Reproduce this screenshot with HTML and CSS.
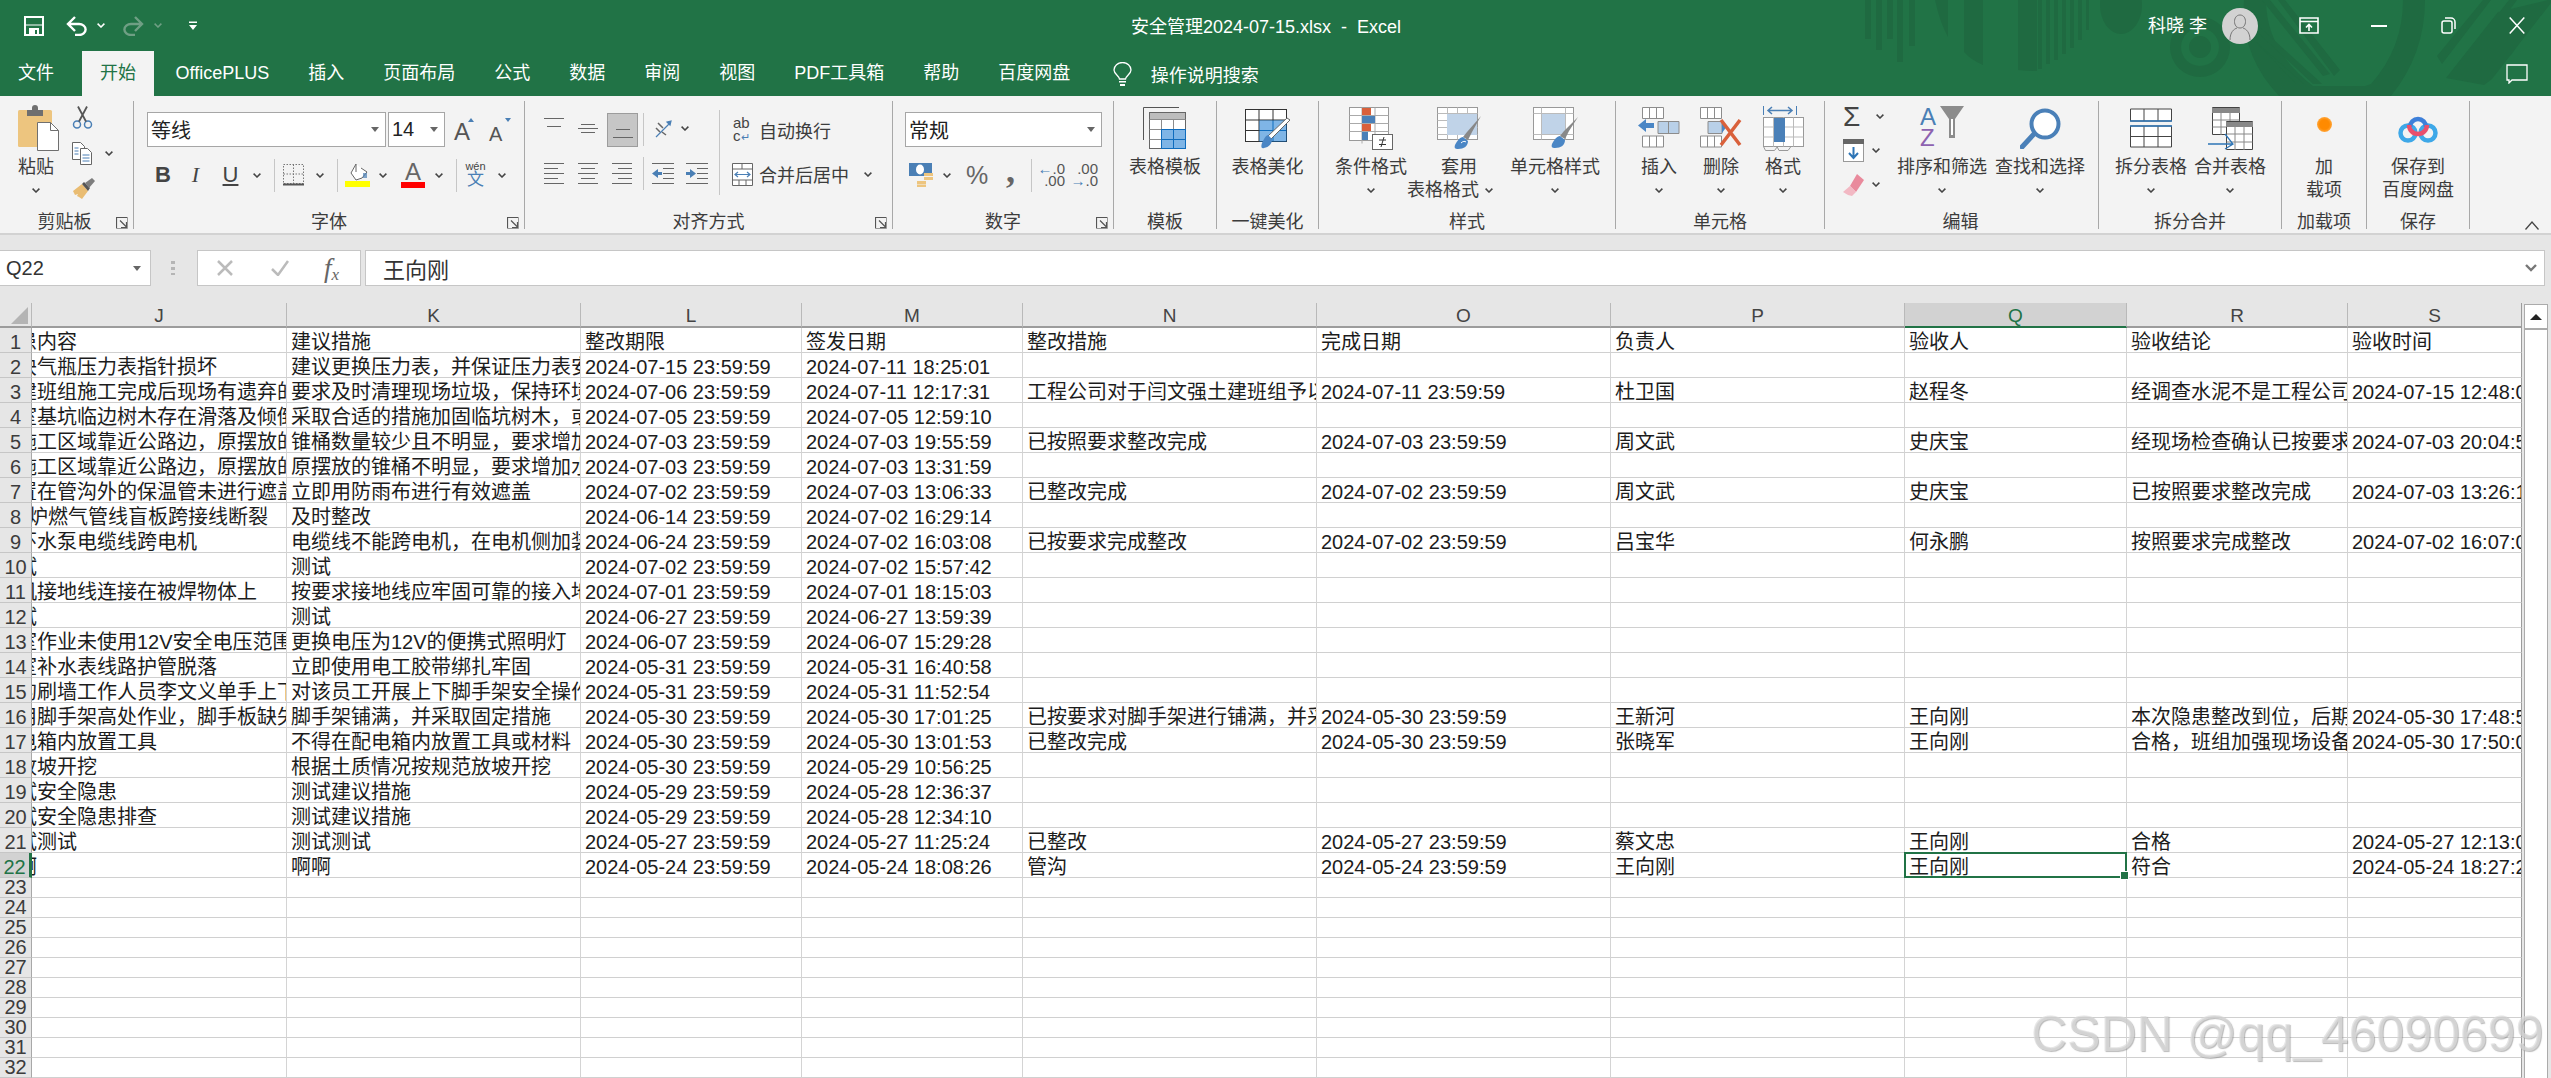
FILE: index.html
```html
<!DOCTYPE html>
<html lang="zh-CN">
<head>
<meta charset="utf-8">
<title>安全管理2024-07-15.xlsx - Excel</title>
<link rel="stylesheet" href="styles.css">
</head>
<body>
<svg class="defs" width="0" height="0" aria-hidden="true">
  <symbol id="chev" viewBox="0 0 8 5"><path d="M.6.6 4 4 7.4.6" fill="none" stroke="#444" stroke-width="1.5"/></symbol>
  <symbol id="launch" viewBox="0 0 12 12"><path d="M.5 11.500V.5h11M4 3.500l6.500 6.500M10.500 5v5.500H5" fill="none" stroke="#555" stroke-width="1.200"/><path d="M11.500 1v10.500H1" fill="none" stroke="#999"/></symbol>
  <symbol id="minitable" viewBox="0 0 22 12"><path d="M.5.5h21v11H.5zM7.500.5v11M14.500.5v11" fill="#fff" stroke="#8c8c8c"/></symbol>
</svg>

<header class="chrome">
  <svg class="decor" width="711" height="96" viewBox="1840 0 711 96" aria-hidden="true">
    <g fill="#1f6a41">
      <path d="M1865 0h6v39h-6zM1876 0h6v50h-6zM1887 0h6v39h-6zM1897 0h6v62h-6zM1909 0h6v46h-6zM1935 0h13v37q-8-14-13-37zM1964 0h19v65q-12-5-19-13zM2018 0h19v71q-10 0-19-1zM2030 0h4v69h-4zM2038 0h4v69h-4zM2046 0h4v64h-4zM2054 0h4v60h-4zM2062 0h4v54h-4zM2070 0h4v48h-4zM2078 0h4v40h-4zM2086 0h3v30h-3z"/>
      <ellipse cx="2121" cy="5" rx="21" ry="29"/>
      <path d="M2200 17a30 30 0 1 0 0 60 30 30 0 0 0 0-60zm0 11a19 19 0 1 1 0 38 19 19 0 0 1 0-38z"/>
      <circle cx="2200" cy="47" r="11"/>
      <path d="M2244 0q-4 55 35 96h112q34-42 34-96h-22q0 48-32 84l-6 2h-52q-47-36-47-86z"/>
      <path d="M2262 0h8l60 74-7 2zM2278 0h7l55 70-6 6zM2252 20l66 60 4 4h-9l-58-54zM2256 42l48 42h-8z"/>
      <path d="M2437 56l46-56h8l-49 64zM2459 64l50-64h8l-52 71zM2446 78l52-66 50-12h3v3l-59 76-8 6zM2476 72l36-44 39-28-40 55-29 26z"/>
    </g>
  </svg>
  <div class="titlebar">
    <div class="qat">
      <svg class="q-save" width="20" height="20" viewBox="0 0 20 20"><path d="M1 1h18v18H1z" fill="none" stroke="#fff" stroke-width="2"/><path d="M5 12h10v7H5z" fill="#fff"/><path d="M11 14h2v4h-2z" fill="#217346"/><path d="M1 1h18v8H1z" fill="none" stroke="#fff" stroke-width="1"/></svg>
      <svg class="q-undo" width="22" height="20" viewBox="0 0 22 20"><path d="M2 8h11a6 5 0 0 1 0 11H9M9 1 2 8l7 7" fill="none" stroke="#fff" stroke-width="2.400"/></svg>
      <svg class="q-ch1" width="8" height="5" viewBox="0 0 8 5"><path d="M.6.6 4 4 7.400.6" fill="none" stroke="#fff" stroke-width="1.500"/></svg>
      <svg class="q-redo" width="22" height="20" viewBox="0 0 22 20"><path d="M20 8H9a6 5 0 0 0 0 11h4M13 1l7 7-7 7" fill="none" stroke="#6f9f84" stroke-width="2.400"/></svg>
      <svg class="q-ch2" width="8" height="5" viewBox="0 0 8 5"><path d="M.6.6 4 4 7.400.6" fill="none" stroke="#6f9f84" stroke-width="1.500"/></svg>
      <svg class="q-cust" width="8" height="9" viewBox="0 0 8 9"><path d="M0 .5h8v1.500H0zM0 4h8L4 9z" fill="#fff"/></svg>
    </div>
    <div class="doc-title">安全管理2024-07-15.xlsx&nbsp;&nbsp;-&nbsp;&nbsp;Excel</div>
    <div class="winctl">
      <span class="user">科晓 李</span>
      <svg class="avatar" width="36" height="36" viewBox="0 0 36 36"><circle cx="18" cy="18" r="18" fill="#d2d2d2"/><path d="M18 7c3.500 0 5.500 3 5.500 6.500S21.500 20 18 20s-5.500-3-5.500-6.500S14.500 7 18 7zM8 32c0-8 4-11 7-12M28 32c0-8-4-11-7-12" fill="none" stroke="#777" stroke-width="1"/></svg>
      <svg class="w-ribbon" width="20" height="17" viewBox="0 0 20 17"><path d="M1 1h18v15H1zM1 4.500h18" fill="none" stroke="#fff" stroke-width="1.600"/><path d="M10 14V8M7 10.500 10 7.500l3 3" fill="none" stroke="#fff" stroke-width="1.600"/></svg>
      <svg class="w-min" width="16" height="2"><rect width="16" height="2" fill="#fff"/></svg>
      <svg class="w-rest" width="15" height="17" viewBox="0 0 15 17"><rect x="1" y="4" width="10" height="12" rx="2" fill="none" stroke="#fff" stroke-width="1.500"/><path d="M4 1h6a4 4 0 0 1 4 4v7" fill="none" stroke="#fff" stroke-width="1.500"/></svg>
      <svg class="w-close" width="16" height="17" viewBox="0 0 16 17"><path d="M.7.5l14.600 16M15.300.5.700 16.500" stroke="#fff" stroke-width="1.500"/></svg>
    </div>
  </div>
  <nav class="tabs">
    <span class="tab tab-file">文件</span>
    <span class="tab tab-on">开始</span>
    <span class="tab tab-plus">OfficePLUS</span>
    <span class="tab">插入</span>
    <span class="tab">页面布局</span>
    <span class="tab">公式</span>
    <span class="tab">数据</span>
    <span class="tab">审阅</span>
    <span class="tab">视图</span>
    <span class="tab">PDF工具箱</span>
    <span class="tab">帮助</span>
    <span class="tab">百度网盘</span>
    <svg class="bulb" width="19" height="24" viewBox="0 0 19 24"><path d="M6.500 17c0-3-5.500-5-5.500-9a8.500 7.500 0 0 1 17 0c0 4-5.500 6-5.500 9z" fill="none" stroke="#fff" stroke-width="1.300"/><path d="M6 19h7v1.500H6zM7 22h5v2H7z" fill="#fff"/></svg>
    <span class="tell">操作说明搜索</span>
    <svg class="comment" width="22" height="20" viewBox="0 0 22 20"><path d="M1 1h20v15H6l-3 3v-3H1z" fill="none" stroke="#fff" stroke-width="1.300"/></svg>
  </nav>
</header>

<section class="ribbon">
  <!-- 剪贴板 -->
  <div class="group g-clip">
    <div class="g-body">
      <div class="big b-paste">
        <div class="big-ic">
          <svg class="paste-ic" width="42" height="46" viewBox="0 0 42 46"><rect y="5" width="34" height="37" rx="1.500" fill="#edc57f"/><path d="M9 5h5V3a3 3 0 0 1 6 0v2h5v6H9z" fill="#6f6f6f"/><path d="M19.500 17.500h13l8 8v20h-21z" fill="#fff" stroke="#6f6f6f"/><path d="M32.500 17.500v8h8" fill="none" stroke="#6f6f6f"/></svg>
        </div>
        <span class="lbl">粘贴</span>
        <svg class="chev-big" width="8" height="5"><use href="#chev"/></svg>
      </div>
      <div class="clip-col">
        <svg class="clip-row" width="21" height="23" viewBox="0 0 21 23"><circle cx="5" cy="18.500" r="3.500" fill="none" stroke="#4a7fb5" stroke-width="1.500"/><circle cx="16" cy="18.500" r="3.500" fill="none" stroke="#4a7fb5" stroke-width="1.500"/><path d="M7 15.500 15 .5M14 15.500 6 .5" stroke="#555" stroke-width="1.800"/></svg>
        <div class="clip-row clip-copy">
          <svg width="21" height="23" viewBox="0 0 21 23"><path d="M.5.5h8l4 4v13H.5z" fill="#fff" stroke="#666"/><path d="M8.500 6.500h7l4 4v12h-11z" fill="#fff" stroke="#666"/><path d="M2.500 6h4M2.500 9h4M2.500 12h4M10.500 13h7M10.500 16h7M10.500 19h7" stroke="#4a7fb5"/></svg>
          <svg class="copy-ch" width="8" height="5"><use href="#chev"/></svg>
        </div>
        <svg class="clip-row" width="24" height="21" viewBox="0 0 24 21"><path d="M1 13l9-7 6 7-6 8-3-2-2-1 1-2-3 1z" fill="#e9bc72"/><path d="M10 6l2-2 6 6-2 3z" fill="#555"/><path d="M13 5 20 0l3 3-6 7z" fill="#7d7d7d"/></svg>
      </div>
    </div>
    <div class="g-label l-clip">剪贴板</div>
    <svg class="launch" width="12" height="12"><use href="#launch"/></svg>
  </div>

  <!-- 字体 -->
  <div class="group g-font">
    <div class="g-body col">
      <div class="row1 f-row1">
        <div class="combo c-font"><span>等线</span><i class="drop"></i></div>
        <div class="combo c-size"><span>14</span><i class="drop"></i></div>
        <span class="grow"><b class="big-a">A</b><i class="tri-up"></i></span>
        <span class="shrink"><b class="small-a">A</b><i class="tri-down"></i></span>
      </div>
      <div class="row2">
        <span class="slot w32 t-b">B</span>
        <span class="slot w33 t-i">I</span>
        <span class="slot w37 t-u">U</span>
        <span class="slot w16"><svg width="8" height="5"><use href="#chev"/></svg></span>
        <i class="sep s9"></i>
        <span class="slot w37"><svg width="21" height="22" viewBox="0 0 21 22"><path d="M.5.5h20v19H.5zM10.500.5v19M.5 10h20" fill="none" stroke="#777" stroke-dasharray="1.500 1.500"/><path d="M0 20.500h21" stroke="#555" stroke-width="2"/></svg></span>
        <span class="slot w16"><svg width="8" height="5"><use href="#chev"/></svg></span>
        <i class="sep s9"></i>
        <span class="slot w39"><svg width="25" height="24" viewBox="0 0 25 24"><path d="M11 1l-5 9 5 7 6-2 5-6-6-4" fill="#fff" stroke="#666"/><path d="M11 1v8" stroke="#666"/><path d="M18 10h4v5h-4z" fill="#4a7fb5" opacity=".7"/><rect y="18" width="25" height="6" fill="#ff0"/></svg></span>
        <span class="slot w12"><svg width="8" height="5"><use href="#chev"/></svg></span>
        <span class="slot w44 color-a"><b>A</b><i class="bar-red"></i></span>
        <span class="slot w8"><svg width="8" height="5"><use href="#chev"/></svg></span>
        <i class="sep s13"></i>
        <span class="slot w37 wen"><em>wén</em><b>文</b></span>
        <span class="slot w16"><svg width="8" height="5"><use href="#chev"/></svg></span>
      </div>
    </div>
    <div class="g-label l-font">字体</div>
    <svg class="launch" width="12" height="12"><use href="#launch"/></svg>
  </div>

  <!-- 对齐方式 -->
  <div class="group g-align">
    <div class="g-body">
      <div class="col al-left">
        <div class="row1 al-r1">
          <span class="slot w34 al-top"><svg width="20" height="9" viewBox="0 0 20 9"><path d="M0 .5h20M3 8.500h14" stroke="#666"/></svg></span>
          <span class="slot w34 al-mid"><svg width="20" height="9" viewBox="0 0 20 9"><path d="M3 .5h14M0 4.500h20M3 8.500h14" stroke="#666"/></svg></span>
          <span class="active-box"><svg width="20" height="9" viewBox="0 0 20 9"><path d="M3 .5h14M0 8.500h20" stroke="#666"/></svg></span>
          <i class="sep s5"></i>
          <svg class="orient" width="19" height="19" viewBox="0 0 19 19"><path d="M2 17 16 3M17 1l-4 1 3 3z" stroke="#4a7fb5" fill="#4a7fb5" stroke-width="1.200"/><path d="M4 3l5 5M2 8l4 4M8 12l4 3" stroke="#666" stroke-width="1.500" fill="none"/></svg>
          <svg class="orient-ch" width="8" height="5"><use href="#chev"/></svg>
        </div>
        <div class="row2 al-r2">
          <span class="slot w34"><svg width="20" height="21" viewBox="0 0 20 21"><path d="M0 .5h20M0 5.500h14M0 10.500h20M0 15.500h14M0 20.500h20" stroke="#666"/></svg></span>
          <span class="slot w34"><svg width="20" height="21" viewBox="0 0 20 21"><path d="M0 .5h20M3 5.500h14M0 10.500h20M3 15.500h14M0 20.500h20" stroke="#666"/></svg></span>
          <span class="slot w34"><svg width="20" height="21" viewBox="0 0 20 21"><path d="M0 .5h20M6 5.500h14M0 10.500h20M6 15.500h14M0 20.500h20" stroke="#666"/></svg></span>
          <i class="sep s4"></i>
          <svg class="ind1" width="22" height="21" viewBox="0 0 22 21"><path d="M0 .5h22M11 5.500h11M11 10.500h11M11 15.500h11M0 20.500h22" stroke="#666"/><path d="M0 10.500 6 6v3h4v3H6v3z" fill="#4a7fb5"/></svg>
          <svg class="ind2" width="22" height="21" viewBox="0 0 22 21"><path d="M0 .5h22M11 5.500h11M11 10.500h11M11 15.500h11M0 20.500h22" stroke="#666"/><path d="M10 10.500 4 6v3H0v3h4v3z" fill="#4a7fb5"/></svg>
        </div>
      </div>
      <i class="sep-tall"></i>
      <div class="col al-right">
        <div class="al-wrap">
          <span class="wrap-ic"><span>ab</span><span>c<small>↵</small></span></span>
          <span class="txt">自动换行</span>
        </div>
        <div class="al-merge">
          <svg width="21" height="23" viewBox="0 0 21 23"><path d="M.5.5h20v22H.5zM.5 6h20M.5 17h20M10 .5V6M7 17v5.500M14 17v5.500" fill="#fff" stroke="#666"/><path d="M3 11.500h15M6 9l-3 2.500L6 14M15 9l3 2.500L15 14" fill="none" stroke="#4a7fb5" stroke-width="1.200"/></svg>
          <span class="txt">合并后居中</span>
          <svg class="merge-ch" width="8" height="5"><use href="#chev"/></svg>
        </div>
      </div>
    </div>
    <div class="g-label l-align">对齐方式</div>
    <svg class="launch" width="12" height="12"><use href="#launch"/></svg>
  </div>

  <!-- 数字 -->
  <div class="group g-num">
    <div class="g-body col">
      <div class="row1 n-row1"><div class="combo c-num"><span>常规</span><i class="drop"></i></div></div>
      <div class="row2 n-row2">
        <svg class="cur" width="24" height="24" viewBox="0 0 24 24"><rect width="23" height="13" fill="#4a7fb5"/><ellipse cx="11" cy="6.500" rx="4" ry="5" fill="#fff"/><path d="M15 10h9v3h-9zM15 14h9v3h-9zM8 18h9v3H8zM8 21.500h9V24H8z" fill="#edc57f"/></svg>
        <svg class="cur-ch" width="8" height="5"><use href="#chev"/></svg>
        <span class="pct">%</span>
        <span class="comma">,</span>
        <i class="sep s15"></i>
        <span class="dec d1"><span><b>←</b>.0</span><span>.00</span></span>
        <span class="dec d2"><span>.00</span><span><b>→</b>.0</span></span>
      </div>
    </div>
    <div class="g-label">数字</div>
    <svg class="launch" width="12" height="12"><use href="#launch"/></svg>
  </div>

  <!-- 模板 -->
  <div class="group g-tpl">
    <div class="g-body">
      <div class="big w-full">
        <div class="big-ic">
          <svg width="44" height="42" viewBox="0 0 44 42"><path d="M.5 33V.5H36" fill="none" stroke="#555"/><rect x="6.500" y="5.500" width="36" height="36" fill="#fff" stroke="#666"/><rect x="7" y="6" width="35" height="6" fill="#bdbdbd"/><path d="M6.500 12.500h36M6.500 22.500h36M6.500 32.500h36M18.500 12.500v29M30.500 12.500v29" stroke="#8c8c8c"/><rect x="18" y="22" width="25" height="20" fill="#0f6cbd"/><path d="M19 23h11v9H19zM31 23h11v9H31zM19 33h11v8H19zM31 33h11v8H31z" fill="#7fb5e6"/></svg>
        </div>
        <span class="lbl">表格模板</span>
      </div>
    </div>
    <div class="g-label">模板</div>
  </div>

  <!-- 一键美化 -->
  <div class="group g-beau">
    <div class="g-body">
      <div class="big w-full">
        <div class="big-ic">
          <svg width="46" height="41" viewBox="0 0 46 41"><rect x=".5" y="1.500" width="41" height="32" fill="#fff" stroke="#333"/><path d="M.5 12h41M.5 22.500h41M14 1.500v32M28 1.500v32" stroke="#333"/><rect x="14.500" y="12.500" width="27" height="21" fill="#0f6cbd"/><path d="M15 13h12.500v9H15zM28.500 13H41v9H28.500zM15 23h12.500v10H15zM28.500 23H41v10H28.500z" fill="#7fb5e6"/><path d="M45 12 26 31l-3-3L42 10z" fill="#fff" stroke="#666"/><path d="M23 27c-3 1-4 4-6 8-1 3-1 6 2 5 5-1 8-4 8-9z" fill="#4a86c5"/></svg>
        </div>
        <span class="lbl">表格美化</span>
      </div>
    </div>
    <div class="g-label">一键美化</div>
  </div>

  <!-- 样式 -->
  <div class="group g-style">
    <div class="g-body">
      <div class="big w88">
        <div class="big-ic">
          <svg width="44" height="43" viewBox="0 0 44 43"><rect x=".5" y=".5" width="39" height="33" fill="#fff" stroke="#999"/><path d="M.5 8.500h39M.5 16.500h39M.5 24.500h39M13 .5v36M26 .5v33" stroke="#aaa"/><rect x="13" y="1" width="9" height="7" fill="#d9603b"/><rect x="13" y="9" width="13" height="7" fill="#4a80b8"/><rect x="13" y="17" width="9" height="7" fill="#d9603b"/><rect x="13" y="25" width="6" height="8" fill="#4a80b8"/><rect x="23.500" y="27.500" width="20" height="15" fill="#fff" stroke="#666"/><path d="M30 37.500h7M30 33h7M35 30l-3 10" stroke="#333"/></svg>
        </div>
        <span class="lbl">条件格式</span>
        <svg class="chev-big" width="8" height="5"><use href="#chev"/></svg>
      </div>
      <div class="big w88">
        <div class="big-ic">
          <svg width="44" height="42" viewBox="0 0 44 42"><rect x=".5" y=".5" width="40" height="32" fill="#fff" stroke="#999"/><path d="M.5 6.500h40M.5 13.500h40M.5 20.500h40M.5 27.500h40M10.500.5v32M20.500.5v32M30.500.5v32" stroke="#bbb"/><rect x="10" y="7" width="30" height="21" fill="#c0d3e8"/><path d="M44 9 35 25l-4 8-5-3 4-5z" fill="#888"/><path d="M26 30c-3 0-6 4-8 8-1 3 0 4 3 4 6 0 10-3 10-8z" fill="#4a86c5"/><path d="M24 36c2-2 4-2 5-1" stroke="#fff" fill="none"/></svg>
        </div>
        <span class="lbl">套用</span>
        <span class="lbl lbl-ch">表格格式<svg width="8" height="5"><use href="#chev"/></svg></span>
      </div>
      <div class="big w104">
        <div class="big-ic">
          <svg width="45" height="42" viewBox="0 0 45 42"><rect x=".5" y=".5" width="40" height="32" fill="#fff" stroke="#999"/><path d="M.5 6.500h40M.5 27.500h40M8.500.5v32M32.500.5v32" stroke="#bbb"/><rect x="9" y="7" width="23" height="20" fill="#c0d3e8"/><path d="M45 10 36 24l-4 8-5-3 4-5z" fill="#888"/><path d="M27 29c-3 0-6 4-8 8-1 3 0 4 3 4 6 0 10-3 10-8z" fill="#4a86c5"/></svg>
        </div>
        <span class="lbl">单元格样式</span>
        <svg class="chev-big" width="8" height="5"><use href="#chev"/></svg>
      </div>
    </div>
    <div class="g-label">样式</div>
  </div>

  <!-- 单元格 -->
  <div class="group g-cell">
    <div class="g-body">
      <div class="big w62">
        <div class="big-ic">
          <svg width="42" height="43" viewBox="0 0 42 43"><use href="#minitable" x="4" y="0" width="22" height="12"/><use href="#minitable" x="4" y="26" width="22" height="17"/><path d="M0 18.500 8 12v4h8v5H8v4z" fill="#4a86c5"/><path d="M20 14.500h21v12H20zM30.500 14.500v12" fill="#b9d0e8" stroke="#8c8c8c"/></svg>
        </div>
        <span class="lbl">插入</span>
        <svg class="chev-big" width="8" height="5"><use href="#chev"/></svg>
      </div>
      <div class="big w62">
        <div class="big-ic">
          <svg width="42" height="43" viewBox="0 0 42 43"><use href="#minitable" x="0" y="0" width="22" height="12"/><use href="#minitable" x="0" y="26" width="22" height="17"/><path d="M8 14.500h14v12H8z" fill="#b9d0e8" stroke="#8c8c8c"/><path d="M22 15l4 5.500-4 5.500" fill="#4a86c5"/><path d="M21 13l19 25M40 13 21 38" stroke="#d9603b" stroke-width="3.500" fill="none"/></svg>
        </div>
        <span class="lbl">删除</span>
        <svg class="chev-big" width="8" height="5"><use href="#chev"/></svg>
      </div>
      <div class="big w62">
        <div class="big-ic">
          <svg width="41" height="45" viewBox="0 0 41 45"><path d="M.5 0v9M33.500 0v9" stroke="#4a7fb5"/><path d="M5 4.500h24M9 1 5 4.500 9 8M25 1l4 3.500L25 8" fill="none" stroke="#4a7fb5" stroke-width="1.500"/><rect x=".5" y="11.500" width="40" height="29" fill="#fff" stroke="#999"/><path d="M.5 21h40M.5 31h40M10.500 11.500v29M20.500 11.500v29M30.500 11.500v29" stroke="#bbb"/><rect x="11" y="12" width="11" height="24" fill="#4a80b8"/><path d="M.5 40.500l2 4h9l3-4M14 40.500l2 4h9l3-4" fill="none" stroke="#999"/></svg>
        </div>
        <span class="lbl">格式</span>
        <svg class="chev-big" width="8" height="5"><use href="#chev"/></svg>
      </div>
    </div>
    <div class="g-label">单元格</div>
  </div>

  <!-- 编辑 -->
  <div class="group g-edit">
    <div class="g-body">
      <div class="edit-col">
        <div class="edit-row"><span class="sigma">Σ</span><svg class="edit-ch1" width="8" height="5"><use href="#chev"/></svg></div>
        <div class="edit-row"><svg width="21" height="23" viewBox="0 0 21 23"><rect x=".5" y=".5" width="20" height="22" fill="#fff" stroke="#999"/><rect width="21" height="5" fill="#666"/><path d="M10.500 8v11M6 14l4.500 5 4.500-5" fill="none" stroke="#2e75b6" stroke-width="2"/></svg><svg class="edit-ch2" width="8" height="5"><use href="#chev"/></svg></div>
        <div class="edit-row"><svg width="21" height="22" viewBox="0 0 21 22"><path d="M14 0l7 6-8 12-6-6z" fill="#e98a9c"/><path d="M7 12l6 6-4 4-4-1-5-3z" fill="#f2b8c3"/></svg><svg class="edit-ch2" width="8" height="5"><use href="#chev"/></svg></div>
      </div>
      <div class="big w90">
        <div class="big-ic sort-ic">
          <span class="az"><span class="a-blue">A</span><span class="z-purple">Z</span></span>
          <svg width="24" height="32" viewBox="0 0 24 32"><path d="M0 0h24l-9 13v19h-6V13z" fill="#8c8c8c"/><path d="M11 13h2v16h-2z" fill="#fff"/></svg>
        </div>
        <span class="lbl">排序和筛选</span>
        <svg class="chev-big" width="8" height="5"><use href="#chev"/></svg>
      </div>
      <div class="big w90 find">
        <div class="big-ic">
          <svg width="41" height="41" viewBox="0 0 41 41"><circle cx="25" cy="16" r="13.500" fill="#fff" stroke="#4a80b8" stroke-width="4"/><path d="M14 26 2 39" stroke="#4a80b8" stroke-width="5" stroke-linecap="round"/></svg>
        </div>
        <span class="lbl">查找和选择</span>
        <svg class="chev-big" width="8" height="5"><use href="#chev"/></svg>
      </div>
    </div>
    <div class="g-label l-edit">编辑</div>
  </div>

  <!-- 拆分合并 -->
  <div class="group g-split">
    <div class="g-body">
      <div class="big w78">
        <div class="big-ic">
          <svg width="42" height="40" viewBox="0 0 42 40"><path d="M.5 1h41v12H.5zM14 1v12M28 1v12M.5 18h41v21H.5zM.5 28.500h41M14 18v21M28 18v21" fill="#fff" stroke="#444"/><path d="M0 13h42M0 18h42" stroke="#2e75b6" stroke-width="1.500"/></svg>
        </div>
        <span class="lbl">拆分表格</span>
        <svg class="chev-big" width="8" height="5"><use href="#chev"/></svg>
      </div>
      <div class="big w78 merge2">
        <div class="big-ic">
          <svg width="45" height="43" viewBox="0 0 45 43"><path d="M4.500.5h27v27h-27z" fill="#fff" stroke="#444"/><rect x="4" y="1" width="28" height="5" fill="#888"/><path d="M4.500 13h27M4.500 20h27M13 6v22M22 6v22" stroke="#888"/><path d="M18.500 14.500h26v28h-26z" fill="#fff" stroke="#444"/><rect x="18" y="15" width="27" height="5" fill="#888"/><path d="M18.500 27h26M18.500 35h26M27 20v23M36 20v23" stroke="#888"/><path d="M0 37h24M17 27l8 10-8 5" fill="none" stroke="#2e75b6" stroke-width="1.300"/></svg>
        </div>
        <span class="lbl">合并表格</span>
        <svg class="chev-big" width="8" height="5"><use href="#chev"/></svg>
      </div>
    </div>
    <div class="g-label">拆分合并</div>
  </div>

  <!-- 加载项 -->
  <div class="group g-add">
    <div class="g-body">
      <div class="big w-full">
        <div class="big-ic dot-wrap"><i class="dot"></i></div>
        <span class="lbl">加</span>
        <span class="lbl">载项</span>
      </div>
    </div>
    <div class="g-label">加载项</div>
  </div>

  <!-- 保存 -->
  <div class="group g-save">
    <div class="g-body">
      <div class="big w-full">
        <div class="big-ic">
          <svg width="40" height="32" viewBox="0 0 40 32"><circle cx="10" cy="21" r="7.500" fill="none" stroke="#3ea8e8" stroke-width="4.500"/><circle cx="30" cy="21" r="7.500" fill="none" stroke="#3ea8e8" stroke-width="4.500"/><path d="M12 15a8 8 0 0 1 16 0" fill="none" stroke="#3d7fd9" stroke-width="4.500"/><path d="M11 13a9 9 0 0 0 18 0" fill="none" stroke="#ea4f6c" stroke-width="4.500"/></svg>
        </div>
        <span class="lbl">保存到</span>
        <span class="lbl">百度网盘</span>
      </div>
    </div>
    <div class="g-label">保存</div>
  </div>

  <svg class="collapse" width="14" height="9" viewBox="0 0 14 9"><path d="M.5 8.500 7 1l6.500 7.500" fill="none" stroke="#444" stroke-width="1.300"/></svg>
</section>

<section class="fbar">
  <div class="namebox"><span>Q22</span><i class="drop"></i></div>
  <div class="fdots"></div>
  <div class="fbtns">
    <svg width="16" height="16" viewBox="0 0 16 16"><path d="M1 1l14 14M15 1 1 15" stroke="#bbb" stroke-width="2.500"/></svg>
    <svg class="fb-ok" width="18" height="16" viewBox="0 0 18 16"><path d="M1 9l6 6L17 1" fill="none" stroke="#bbb" stroke-width="2.500"/></svg>
    <span class="fx">f<sub>x</sub></span>
  </div>
  <div class="finput"><span>王向刚</span><svg width="12" height="8" viewBox="0 0 12 8"><path d="M1 1l5 5 5-5" fill="none" stroke="#777" stroke-width="2.400"/></svg></div>
</section>

<main class="sheet">
  <div class="grid">
    <table>
      <colgroup><col class="c-h"><col class="c-j"><col class="c-k"><col class="c-d"><col class="c-d"><col class="c-k"><col class="c-k"><col class="c-k"><col class="c-q"><col class="c-d"><col class="c-s"></colgroup>
      <thead>
        <tr><th class="corner"><svg width="17" height="17" viewBox="0 0 17 17"><path d="M17 0v17H0z" fill="#b4b4b4"/></svg></th><th>J</th><th>K</th><th>L</th><th>M</th><th>N</th><th>O</th><th>P</th><th class="hd-on">Q</th><th>R</th><th class="hd-s">S</th></tr>
      </thead>
      <tbody>
        <tr><th>1</th><td class="j">患内容</td><td>建议措施</td><td>整改期限</td><td>签发日期</td><td>整改措施</td><td>完成日期</td><td>负责人</td><td>验收人</td><td>验收结论</td><td>验收时间</td></tr>
        <tr><th>2</th><td class="j">炔气瓶压力表指针损坏</td><td>建议更换压力表，并保证压力表安全有效</td><td>2024-07-15 23:59:59</td><td>2024-07-11 18:25:01</td><td></td><td></td><td></td><td></td><td></td><td></td></tr>
        <tr><th>3</th><td class="j">建班组施工完成后现场有遗弃的</td><td>要求及时清理现场垃圾，保持环境整洁</td><td>2024-07-06 23:59:59</td><td>2024-07-11 12:17:31</td><td>工程公司对于闫文强土建班组予以</td><td>2024-07-11 23:59:59</td><td>杜卫国</td><td>赵程冬</td><td>经调查水泥不是工程公司的</td><td>2024-07-15 12:48:01</td></tr>
        <tr><th>4</th><td class="j">室基坑临边树木存在滑落及倾倒</td><td>采取合适的措施加固临坑树木，或者</td><td>2024-07-05 23:59:59</td><td>2024-07-05 12:59:10</td><td></td><td></td><td></td><td></td><td></td><td></td></tr>
        <tr><th>5</th><td class="j">施工区域靠近公路边，原摆放的</td><td>锥桶数量较少且不明显，要求增加</td><td>2024-07-03 23:59:59</td><td>2024-07-03 19:55:59</td><td>已按照要求整改完成</td><td>2024-07-03 23:59:59</td><td>周文武</td><td>史庆宝</td><td>经现场检查确认已按要求整改</td><td>2024-07-03 20:04:59</td></tr>
        <tr><th>6</th><td class="j">施工区域靠近公路边，原摆放的</td><td>原摆放的锥桶不明显，要求增加水马</td><td>2024-07-03 23:59:59</td><td>2024-07-03 13:31:59</td><td></td><td></td><td></td><td></td><td></td><td></td></tr>
        <tr><th>7</th><td class="j">置在管沟外的保温管未进行遮盖</td><td>立即用防雨布进行有效遮盖</td><td>2024-07-02 23:59:59</td><td>2024-07-03 13:06:33</td><td>已整改完成</td><td>2024-07-02 23:59:59</td><td>周文武</td><td>史庆宝</td><td>已按照要求整改完成</td><td>2024-07-03 13:26:15</td></tr>
        <tr><th>8</th><td class="j">1炉燃气管线盲板跨接线断裂</td><td>及时整改</td><td>2024-06-14 23:59:59</td><td>2024-07-02 16:29:14</td><td></td><td></td><td></td><td></td><td></td><td></td></tr>
        <tr><th>9</th><td class="j">环水泵电缆线跨电机</td><td>电缆线不能跨电机，在电机侧加装</td><td>2024-06-24 23:59:59</td><td>2024-07-02 16:03:08</td><td>已按要求完成整改</td><td>2024-07-02 23:59:59</td><td>吕宝华</td><td>何永鹏</td><td>按照要求完成整改</td><td>2024-07-02 16:07:01</td></tr>
        <tr><th>10</th><td class="j">试</td><td>测试</td><td>2024-07-02 23:59:59</td><td>2024-07-02 15:57:42</td><td></td><td></td><td></td><td></td><td></td><td></td></tr>
        <tr><th>11</th><td class="j">机接地线连接在被焊物体上</td><td>按要求接地线应牢固可靠的接入地</td><td>2024-07-01 23:59:59</td><td>2024-07-01 18:15:03</td><td></td><td></td><td></td><td></td><td></td><td></td></tr>
        <tr><th>12</th><td class="j">试</td><td>测试</td><td>2024-06-27 23:59:59</td><td>2024-06-27 13:59:39</td><td></td><td></td><td></td><td></td><td></td><td></td></tr>
        <tr><th>13</th><td class="j">室作业未使用12V安全电压范围</td><td>更换电压为12V的便携式照明灯</td><td>2024-06-07 23:59:59</td><td>2024-06-07 15:29:28</td><td></td><td></td><td></td><td></td><td></td><td></td></tr>
        <tr><th>14</th><td class="j">室补水表线路护管脱落</td><td>立即使用电工胶带绑扎牢固</td><td>2024-05-31 23:59:59</td><td>2024-05-31 16:40:58</td><td></td><td></td><td></td><td></td><td></td><td></td></tr>
        <tr><th>15</th><td class="j">的刷墙工作人员李文义单手上下</td><td>对该员工开展上下脚手架安全操作</td><td>2024-05-31 23:59:59</td><td>2024-05-31 11:52:54</td><td></td><td></td><td></td><td></td><td></td><td></td></tr>
        <tr><th>16</th><td class="j">用脚手架高处作业，脚手板缺失</td><td>脚手架铺满，并采取固定措施</td><td>2024-05-30 23:59:59</td><td>2024-05-30 17:01:25</td><td>已按要求对脚手架进行铺满，并采</td><td>2024-05-30 23:59:59</td><td>王新河</td><td>王向刚</td><td>本次隐患整改到位，后期加强</td><td>2024-05-30 17:48:59</td></tr>
        <tr><th>17</th><td class="j">电箱内放置工具</td><td>不得在配电箱内放置工具或材料</td><td>2024-05-30 23:59:59</td><td>2024-05-30 13:01:53</td><td>已整改完成</td><td>2024-05-30 23:59:59</td><td>张晓军</td><td>王向刚</td><td>合格，班组加强现场设备管理</td><td>2024-05-30 17:50:01</td></tr>
        <tr><th>18</th><td class="j">放坡开挖</td><td>根据土质情况按规范放坡开挖</td><td>2024-05-30 23:59:59</td><td>2024-05-29 10:56:25</td><td></td><td></td><td></td><td></td><td></td><td></td></tr>
        <tr><th>19</th><td class="j">试安全隐患</td><td>测试建议措施</td><td>2024-05-29 23:59:59</td><td>2024-05-28 12:36:37</td><td></td><td></td><td></td><td></td><td></td><td></td></tr>
        <tr><th>20</th><td class="j">试安全隐患排查</td><td>测试建议措施</td><td>2024-05-29 23:59:59</td><td>2024-05-28 12:34:10</td><td></td><td></td><td></td><td></td><td></td><td></td></tr>
        <tr><th>21</th><td class="j">试测试</td><td>测试测试</td><td>2024-05-27 23:59:59</td><td>2024-05-27 11:25:24</td><td>已整改</td><td>2024-05-27 23:59:59</td><td>蔡文忠</td><td>王向刚</td><td>合格</td><td>2024-05-27 12:13:01</td></tr>
        <tr class="row-on"><th>22</th><td class="j">啊</td><td>啊啊</td><td>2024-05-24 23:59:59</td><td>2024-05-24 18:08:26</td><td>管沟</td><td>2024-05-24 23:59:59</td><td>王向刚</td><td class="sel">王向刚</td><td>符合</td><td>2024-05-24 18:27:25</td></tr>
        <tr class="short"><th>23</th><td></td><td></td><td></td><td></td><td></td><td></td><td></td><td></td><td></td><td></td></tr>
        <tr class="short"><th>24</th><td></td><td></td><td></td><td></td><td></td><td></td><td></td><td></td><td></td><td></td></tr>
        <tr class="short"><th>25</th><td></td><td></td><td></td><td></td><td></td><td></td><td></td><td></td><td></td><td></td></tr>
        <tr class="short"><th>26</th><td></td><td></td><td></td><td></td><td></td><td></td><td></td><td></td><td></td><td></td></tr>
        <tr class="short"><th>27</th><td></td><td></td><td></td><td></td><td></td><td></td><td></td><td></td><td></td><td></td></tr>
        <tr class="short"><th>28</th><td></td><td></td><td></td><td></td><td></td><td></td><td></td><td></td><td></td><td></td></tr>
        <tr class="short"><th>29</th><td></td><td></td><td></td><td></td><td></td><td></td><td></td><td></td><td></td><td></td></tr>
        <tr class="short"><th>30</th><td></td><td></td><td></td><td></td><td></td><td></td><td></td><td></td><td></td><td></td></tr>
        <tr class="short"><th>31</th><td></td><td></td><td></td><td></td><td></td><td></td><td></td><td></td><td></td><td></td></tr>
        <tr class="short"><th>32</th><td></td><td></td><td></td><td></td><td></td><td></td><td></td><td></td><td></td><td></td></tr>
      </tbody>
    </table>
  </div>
  <div class="vscroll">
    <div class="vs-btn"><i></i></div>
    <div class="vs-thumb"></div>
  </div>
</main>
<div class="watermark">CSDN @qq_46090699</div>
</body>
</html>
```
FILE: styles.css
```css
* { box-sizing: border-box; }
html, body { margin: 0; padding: 0; }
body {
  width: 2551px; height: 1078px; overflow: hidden; position: relative;
  background: #e6e6e6;
  font-family: "Liberation Sans", "Noto Sans CJK SC", sans-serif;
  font-size: 18px; color: #3c3c3c;
}
i { font-style: normal; }
svg { display: block; flex: none; }
.defs { position: absolute; }

/* title + tabs */
.chrome { background: #217346; height: 96px; position: relative; color: #fff; }
.decor { position: absolute; top: 0; right: 0; }
.titlebar { height: 51px; display: flex; align-items: center; position: relative; }
.qat { width: 1131px; display: flex; align-items: center; }
.q-save { margin-left: 24px; }
.q-undo { margin-left: 22px; }
.q-ch1 { margin-left: 9px; }
.q-redo { margin-left: 17px; }
.q-ch2 { margin-left: 10px; }
.q-cust { margin-left: 27px; }
.doc-title { white-space: nowrap; font-size: 18px; padding-bottom: 1px; }
.winctl { margin-left: auto; display: flex; align-items: center; }
.user { font-size: 18px; width: 66px; white-space: nowrap; padding-bottom: 3px; }
.avatar { margin-left: 8px; }
.w-ribbon { margin-left: 41px; }
.w-min { margin-left: 52px; }
.w-rest { margin-left: 54px; }
.w-close { margin-left: 53px; margin-right: 26px; }

.tabs { height: 45px; display: flex; align-items: center; position: relative; }
.tab { padding: 0 19.5px; height: 45px; line-height: 45px; white-space: nowrap; }
.tab-file { padding: 0 28px 0 18px; }
.tab-on { padding: 0 18px; background: #f3f3f3; color: #217346; }
.tab-plus { margin-left: 2px; }
.bulb { margin-left: 23px; }
.tell { margin-left: 19px; white-space: nowrap; }
.comment { margin-left: auto; margin-right: 23px; }

/* ribbon */
.ribbon { height: 139px; background: #f3f3f3; border-bottom: 2px solid #d2d2d2; display: flex; position: relative; align-items: flex-start; }
.group { margin-top: 5px; height: 128px; border-right: 1px solid #a8a8a8; position: relative; flex: none; display: flex; flex-direction: column; }
.g-clip { width: 134px; }
.g-font { width: 391px; }
.g-align { width: 368px; }
.g-num { width: 221px; }
.g-tpl { width: 103px; }
.g-beau { width: 102px; }
.g-style { width: 297px; }
.g-cell { width: 209px; }
.g-edit { width: 274px; }
.g-split { width: 183px; }
.g-add { width: 85px; }
.g-save { width: 103px; }
.g-body { height: 110px; display: flex; }
.col { flex-direction: column; display: flex; }
.g-label { height: 18px; line-height: 22px; text-align: center; white-space: nowrap; }
.l-clip { padding-right: 2px; margin-left: -2px; }
.l-edit { margin-left: -2px; }
.launch { position: absolute; right: 5px; bottom: 0; }
.collapse { position: absolute; left: 2525px; top: 125px; }

.big { display: flex; flex-direction: column; align-items: center; padding-top: 3px; flex: none; }
.big-ic { height: 48px; margin-bottom: 4px; display: flex; align-items: center; justify-content: center; }
.lbl { line-height: 23px; height: 23px; white-space: nowrap; }
.lbl-ch { margin-left: -18px; display: flex; align-items: center; gap: 6px; }
.chev-big { margin-top: 9px; }
.w-full { width: 100%; }
.w88 { width: 88px; }
.w104 { width: 104px; }
.w62 { width: 62px; }
.w90 { width: 90px; }
.w78 { width: 78px; }

/* clipboard */
.b-paste { width: 72px; }
.paste-ic { margin-left: 5px; }
.clip-col { padding-top: 5px; display: flex; flex-direction: column; gap: 13px; }
.clip-copy { display: flex; align-items: center; height: 23px; }
.copy-ch { margin-left: 12px; }

/* font */
.row1 { display: flex; }
.row2 { display: flex; align-items: center; height: 24px; margin-top: 16px; }
.f-row1 { margin: 11px 0 0 13px; height: 35px; align-items: flex-start; }
.g-font .row2 { margin-left: 13px; }
.combo { height: 35px; background: #fff; border: 1px solid #a6a6a6; display: flex; align-items: center; font-size: 20px; position: relative; }
.combo span { padding-left: 3px; color: #222; }
.c-font { width: 239px; }
.c-size { width: 57px; margin-left: 2px; }
.c-num { width: 197px; margin-left: 12px; }
.drop { margin-left: auto; margin-right: 6px; border: 4px solid transparent; border-top: 5px solid #666; border-bottom: 0; width: 0; height: 0; }
.grow, .shrink { position: relative; display: block; }
.grow { margin-left: 9px; width: 20px; }
.shrink { margin-left: 15px; width: 20px; }
.big-a { font-weight: 400; font-size: 24px; line-height: 40px; color: #555; display: block; }
.small-a { font-weight: 400; font-size: 20px; line-height: 44px; color: #555; display: block; }
.tri-up { position: absolute; right: 0; top: 6px; border: 3.5px solid transparent; border-bottom: 4px solid #4a7fb5; border-top: 0; }
.tri-down { position: absolute; right: -2px; top: 6px; border: 3.5px solid transparent; border-top: 4px solid #4a7fb5; border-bottom: 0; }
.slot { display: flex; align-items: center; justify-content: center; flex: none; }
.w8 { width: 8px; } .w12 { width: 12px; } .w16 { width: 16px; } .w32 { width: 32px; } .w33 { width: 33px; }
.w34 { width: 34px; } .w37 { width: 37px; } .w39 { width: 39px; } .w44 { width: 44px; margin-left: 2px; }
.sep { width: 1px; height: 33px; background: #c6c6c6; flex: none; }
.s4 { margin-left: 4px; } .s5 { margin-left: 5px; } .s9 { margin-left: 9px; } .s13 { margin-left: 13px; } .s15 { margin-left: 15px; }
.t-b { font-weight: 700; font-size: 22px; color: #444; }
.t-i { font-style: italic; font-size: 22px; font-family: "Liberation Serif", serif; color: #444; }
.t-u { text-decoration: underline; font-size: 22px; color: #444; }
.color-a { flex-direction: column; height: 26px; }
.color-a b { font-weight: 400; font-size: 24px; line-height: 20px; color: #666; height: 20px; }
.bar-red { width: 24px; height: 6px; background: #f00; }
.wen { flex-direction: column; color: #4a7fb5; height: 26px; }
.wen em { font-style: normal; font-size: 11px; line-height: 9px; color: #444; }
.wen b { font-weight: 400; font-size: 17px; line-height: 17px; }

/* alignment */
.al-left { width: 194px; padding-left: 12px; }
.al-r1 { margin-top: 12px; height: 34px; align-items: flex-start; }
.al-top { height: 19px; }
.al-mid { height: 30px; }
.active-box { width: 31px; height: 34px; margin-left: 2px; background: #c6c6c6; border: 1px solid #9c9c9c; display: flex; justify-content: center; align-items: flex-end; padding-bottom: 8px; }
.orient { margin-left: 10px; margin-top: 7px; }
.orient-ch { margin-left: 8px; margin-top: 13px; }
.al-r2 { margin-top: 14px; }
.ind1 { margin-left: 8px; }
.ind2 { margin-left: 12px; }
.sep-tall { width: 1px; height: 85px; background: #c6c6c6; margin-top: 9px; flex: none; }
.al-right { padding-left: 12px; }
.al-wrap { display: flex; align-items: center; margin-top: 15px; height: 28px; }
.wrap-ic { width: 20px; display: flex; flex-direction: column; font-size: 15px; line-height: 13px; color: #444; margin-left: 1px; }
.wrap-ic small { font-size: 11px; color: #4a7fb5; }
.txt { margin-left: 6px; white-space: nowrap; }
.al-merge { display: flex; align-items: center; margin-top: 18px; height: 24px; }
.merge-ch { margin-left: 15px; }

/* number */
.n-row1 { margin-top: 11px; height: 35px; }
.n-row2 { margin-top: 16px; padding-left: 16px; }
.cur-ch { margin-left: 10px; }
.pct { margin-left: 15px; width: 21px; font-size: 25px; color: #666; font-weight: 400; line-height: 24px; text-align: center; }
.comma { margin-left: 19px; width: 10px; font-size: 36px; line-height: 14px; font-weight: 700; color: #666; font-family: "Liberation Serif", serif; height: 24px; }
.dec { display: flex; flex-direction: column; font-size: 15px; line-height: 12px; width: 25px; color: #555; align-items: flex-end; }
.dec b { color: #4a7fb5; font-weight: 700; }
.d1 { margin-left: 8px; }
.d2 { margin-left: 8px; }

/* edit */
.edit-col { width: 72px; padding: 4px 0 0 18px; display: flex; flex-direction: column; gap: 11px; }
.edit-row { display: flex; align-items: center; height: 23px; }
.sigma { font-size: 28px; color: #444; width: 20px; line-height: 23px; }
.edit-ch1 { margin-left: 13px; }
.edit-ch2 { margin-left: 8px; }
.sort-ic { align-items: flex-start; padding-top: 2px; }
.az { display: flex; flex-direction: column; font-size: 24px; line-height: 21px; width: 20px; }
.a-blue { color: #4a7fb5; }
.z-purple { color: #8e62b0; }
.find { margin-left: 8px; }

/* split */
.g-split .g-body { padding-left: 13px; }
.merge2 { margin-left: 1px; }
.g-style .g-body { padding-left: 8px; }
.g-cell .g-body { padding-left: 12px; }
.dot-wrap { width: 100%; padding-bottom: 8px; }
.dot { display: block; width: 15px; height: 15px; border-radius: 50%; background: radial-gradient(circle, #ff8a00 45%, #ffc680 100%); }

/* formula bar */
.fbar { height: 68px; display: flex; padding-top: 15px; align-items: flex-start; }
.namebox { width: 151px; height: 36px; background: #fff; border: 1px solid #c6c6c6; border-left: 0; display: flex; align-items: center; font-size: 20px; }
.namebox span { padding-left: 6px; color: #333; }
.namebox .drop { margin-right: 9px; }
.fdots { width: 4px; height: 14px; margin: 11px 22px 0 20px; background: repeating-linear-gradient(#b5b5b5 0 3px, transparent 3px 6px); }
.fbtns { width: 164px; height: 36px; background: #fff; border: 1px solid #c6c6c6; display: flex; align-items: center; padding-left: 19px; }
.fb-ok { margin-left: 38px; }
.fx { margin-left: 35px; font-family: "Liberation Serif", serif; font-style: italic; font-size: 27px; color: #666; line-height: 20px; }
.fx sub { font-size: 17px; vertical-align: -3px; line-height: 0; }
.finput { width: 2180px; margin-left: 4px; height: 36px; background: #fff; border: 1px solid #c6c6c6; display: flex; align-items: center; padding-left: 17px; font-size: 22px; color: #333; }
.finput svg { margin-left: auto; margin-right: 7px; }

/* sheet */
.sheet { display: flex; align-items: flex-start; height: 775px; overflow: hidden; }
.grid { width: 2522px; flex: none; }
table { border-collapse: separate; border-spacing: 0; table-layout: fixed; width: 2522px; font-size: 20px; color: #1c1c1c; }
.c-h { width: 32px; }
.c-j { width: 255px; }
.c-k { width: 294px; }
.c-d { width: 221px; }
.c-q { width: 222px; }
.c-s { width: 174px; }
thead th { height: 25px; background: #e6e6e6; border-right: 1px solid #b9b9b9; border-bottom: 2px solid #9c9c9c; font-weight: 400; font-size: 19px; color: #444; padding: 2px 0 0; line-height: 21px; }
.corner svg { margin: 2px 0 0 11px; }
thead th.corner { padding: 0; }
thead th.hd-on { background: #d2d2d2; color: #217346; border-bottom-color: #217346; }
thead th.hd-s { border-right: 1px solid #9c9c9c; }
tbody tr { height: 25px; }
tbody tr.short { height: 20px; }
tbody th { background: #e6e6e6; border-right: 1px solid #a8a8a8; border-bottom: 1px solid #c6c6c6; font-weight: 400; font-size: 20px; color: #3c3c3c; padding: 3px 0 0; line-height: 20px; text-align: center; }
tbody td { border-right: 1px solid #d4d4d4; border-bottom: 1px solid #d0d0d0; background: #fff; padding: 4px 0 0 4px; white-space: nowrap; overflow: hidden; line-height: 20px; height: 25px; vertical-align: bottom; }
tbody tr.short td { height: 20px; padding: 0; line-height: 19px; }
tbody tr.short th { height: 20px; padding: 0; line-height: 19px; }
tbody td:last-child { border-right: 1px solid #9c9c9c; }
td.j { padding-left: 0; text-indent: -15px; }
.row-on th { background: #d2d2d2; color: #217346; border-right: 3px solid #217346; }
td.sel { position: relative; overflow: visible; }
td.sel::after { content: ""; position: absolute; left: -1px; top: -1px; right: -1px; bottom: -1px; border: 2px solid #217346; pointer-events: none; }
td.sel::before { content: ""; position: absolute; right: -3px; bottom: -3px; width: 7px; height: 7px; background: #217346; border: 1px solid #fff; z-index: 1; }
.vscroll { width: 24px; margin: 1px 0 0 2px; flex: none; }
.vs-btn { height: 26px; background: #fff; border: 1px solid #ababab; border-bottom: 2px solid #ababab; display: flex; align-items: center; justify-content: center; }
.vs-btn i { border: 6px solid transparent; border-bottom: 6px solid #222; border-top: 0; }
.vs-thumb { height: 760px; background: #fff; border: 1px solid #ababab; border-top: 0; }
.watermark { position: absolute; left: 2031px; top: 1006px; font-size: 50px; line-height: 56px; white-space: nowrap; color: rgba(222,222,222,.7); text-shadow: 1px 1px 1px rgba(130,130,130,.55); }
```
